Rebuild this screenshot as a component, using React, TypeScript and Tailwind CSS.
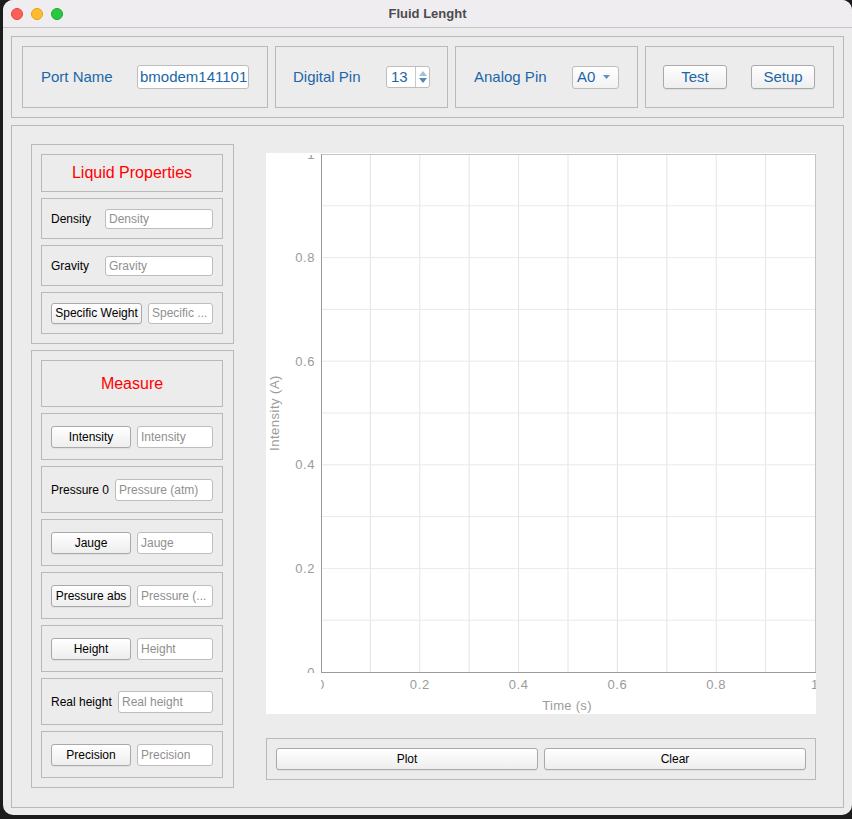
import React from "react";

const btn =
  "flex items-center justify-center rounded-[3px] border border-[#a9a9a9] bg-linear-to-b from-[#ffffff] to-[#eeeeee] shadow-[0_1px_1px_rgba(0,0,0,0.06)] text-[12px] text-black";
const field =
  "flex items-center rounded-[3px] border border-[#bdbdbd] bg-white pl-[3px] text-[12px] text-[#8f8f8f] overflow-hidden whitespace-nowrap";
const panel = "border border-[#b9b9b9]";

function Row({ children, h }: { children: React.ReactNode; h: string }) {
  return <div className={`${panel} ${h} flex items-center justify-between px-[9px]`}>{children}</div>;
}

function Chart() {
  const X0 = 55,
    X1 = 549,
    Y0 = 1,
    Y1 = 519;
  const xs = Array.from({ length: 11 }, (_, i) => X0 + (i * (X1 - X0)) / 10);
  const ys = Array.from({ length: 11 }, (_, i) => Y1 - (i * (Y1 - Y0)) / 10);
  const xl = ["0", "0.2", "0.4", "0.6", "0.8", "1"];
  const txt = { fontFamily: "'Liberation Sans', Arial, sans-serif", fontSize: 13, fill: "#9b9b9b", letterSpacing: 0.6 };
  return (
    <svg width={550} height={561} className="block bg-white">
      <defs>
        <clipPath id="cy">
          <rect x={0} y={2} width={550} height={518} />
        </clipPath>
        <clipPath id="cx">
          <rect x={55} y={0} width={495} height={561} />
        </clipPath>
      </defs>
      {xs.slice(1, 10).map((x, i) => (
        <line key={"v" + i} x1={x} x2={x} y1={Y0} y2={Y1} stroke="#e4e4e4" strokeWidth={1} />
      ))}
      {ys.slice(1, 10).map((y, i) => (
        <line key={"h" + i} x1={X0} x2={X1} y1={y} y2={y} stroke="#e9e9e9" strokeWidth={1} />
      ))}
      <line x1={X0} x2={X1 + 0.5} y1={Y0 + 0.5} y2={Y0 + 0.5} stroke="#c4c4c4" />
      <line x1={X1 + 0.5} x2={X1 + 0.5} y1={Y0} y2={Y1} stroke="#c4c4c4" />
      <line x1={X0 + 0.5} x2={X0 + 0.5} y1={Y0} y2={Y1 + 1} stroke="#9a9a9a" />
      <line x1={X0} x2={X1 + 1} y1={Y1 + 0.5} y2={Y1 + 0.5} stroke="#9a9a9a" />
      <g clipPath="url(#cy)">
        {xl.map((l, i) => (
          <text key={"yl" + i} x={49} y={ys[i * 2]} textAnchor="end" dominantBaseline="central" style={txt}>
            {l}
          </text>
        ))}
      </g>
      <g clipPath="url(#cx)">
        {xl.map((l, i) => (
          <text key={"xl" + i} x={xs[i * 2]} y={531} textAnchor="middle" dominantBaseline="central" style={txt}>
            {l}
          </text>
        ))}
      </g>
      <text x={301} y={552} textAnchor="middle" dominantBaseline="central" style={{ ...txt, letterSpacing: 0.3 }}>
        Time (s)
      </text>
      <text
        x={0}
        y={0}
        textAnchor="middle"
        dominantBaseline="central"
        transform="translate(8 260) rotate(-90)"
        style={{ ...txt, letterSpacing: 0.5 }}
      >
        Intensity (A)
      </text>
    </svg>
  );
}

export default function App() {
  return (
    <div className="w-[852px] h-[819px] bg-[#1c1c1c] pl-[3px] pb-[4px] flex font-['Liberation_Sans',Arial,sans-serif]">
      <div className="flex-1 rounded-[10px] overflow-hidden bg-[#ececec] flex flex-col">
        {/* Title bar */}
        <div className="relative h-[28px] shrink-0 bg-[#efedf0] border-b border-[#c4c4c4] flex items-center pl-[8px] gap-[8px]">
          <div className="w-[12px] h-[12px] rounded-full bg-[#fe5f57] border border-[#e2463f]" />
          <div className="w-[12px] h-[12px] rounded-full bg-[#febc2e] border border-[#e1a116]" />
          <div className="w-[12px] h-[12px] rounded-full bg-[#28c840] border border-[#1aab29]" />
          <div className="absolute inset-0 flex items-center justify-center text-[13px] font-bold text-[#4c4c4c]">
            Fluid Lenght
          </div>
        </div>

        <div className="flex flex-col px-[8px] pt-[8px] gap-[7px]">
          {/* Top panel */}
          <div className={`${panel} flex gap-[7px] pl-[10px] pr-[9px] py-[9px]`}>
            <div className={`${panel} w-[246px] h-[62px] flex items-center justify-between px-[18px]`}>
              <span className="text-[15px] text-[#1a66a8]">Port Name</span>
              <div className="w-[112px] h-[24px] rounded-[3px] border border-[#bdbdbd] bg-white flex items-center pl-[2px] text-[15px] text-[#1a66a8] whitespace-nowrap overflow-hidden">
                bmodem141101
              </div>
            </div>
            <div className={`${panel} w-[173px] h-[62px] flex items-center justify-between px-[17px]`}>
              <span className="text-[15px] text-[#1a66a8]">Digital Pin</span>
              <div className="w-[44px] h-[22px] rounded-[3px] border border-[#bdbdbd] bg-white flex">
                <div className="w-[28px] flex items-center pl-[4px] text-[15px] text-[#1a66a8]">13</div>
                <div className="flex-1 border-l border-[#c8c8c8] flex flex-col items-center justify-center gap-[2px]">
                  <svg width="8" height="5" viewBox="0 0 8 5">
                    <path d="M4 0 L8 5 L0 5 Z" fill="#a9bfd3" />
                  </svg>
                  <svg width="8" height="5" viewBox="0 0 8 5">
                    <path d="M0 0 L8 0 L4 5 Z" fill="#4a8bc4" />
                  </svg>
                </div>
              </div>
            </div>
            <div className={`${panel} w-[183px] h-[62px] flex items-center justify-between pl-[18px] pr-[18px]`}>
              <span className="text-[15px] text-[#1a66a8]">Analog Pin</span>
              <div className="w-[47px] h-[23px] rounded-[3px] border border-[#bdbdbd] bg-linear-to-b from-[#ffffff] to-[#f2f2f2] flex items-center justify-between pl-[4px] pr-[8px]">
                <span className="text-[15px] text-[#1a66a8]">A0</span>
                <svg width="7" height="4" viewBox="0 0 7 4">
                  <path d="M0 0 L7 0 L3.5 4 Z" fill="#5b93c8" />
                </svg>
              </div>
            </div>
            <div className={`${panel} w-[189px] h-[62px] flex items-center justify-between pl-[17px] pr-[18px]`}>
              <div className={`${btn} w-[64px] h-[24px] !text-[15px] !text-[#1a66a8]`}>Test</div>
              <div className={`${btn} w-[64px] h-[24px] !text-[15px] !text-[#1a66a8]`}>Setup</div>
            </div>
          </div>

          {/* Main panel */}
          <div className={`${panel} h-[683px] flex items-start pl-[19px] pt-[18px] gap-[32px]`}>
            {/* Left column */}
            <div className="w-[203px] flex flex-col gap-[6px]">
              <div className={`${panel} flex flex-col gap-[6px] pt-[9px] pb-[9px] pl-[9px] pr-[10px]`}>
                <div className={`${panel} h-[38px] flex items-center justify-center text-[16px] text-[#ff0000]`}>
                  Liquid Properties
                </div>
                <Row h="h-[41px]">
                  <span className="text-[12px] text-black">Density</span>
                  <div className={`${field} w-[108px] h-[20px]`}>Density</div>
                </Row>
                <Row h="h-[41px]">
                  <span className="text-[12px] text-black">Gravity</span>
                  <div className={`${field} w-[108px] h-[20px]`}>Gravity</div>
                </Row>
                <Row h="h-[42px]">
                  <div className={`${btn} w-[91px] h-[21px]`}>Specific Weight</div>
                  <div className={`${field} w-[65px] h-[21px]`}>Specific ...</div>
                </Row>
              </div>

              <div className={`${panel} flex flex-col gap-[6px] pt-[9px] pb-[9px] pl-[9px] pr-[10px]`}>
                <div className={`${panel} h-[47px] flex items-center justify-center text-[16px] text-[#ff0000]`}>
                  Measure
                </div>
                <Row h="h-[47px]">
                  <div className={`${btn} w-[80px] h-[22px]`}>Intensity</div>
                  <div className={`${field} w-[76px] h-[22px]`}>Intensity</div>
                </Row>
                <Row h="h-[47px]">
                  <span className="text-[12px] text-black">Pressure 0</span>
                  <div className={`${field} w-[98px] h-[22px]`}>Pressure (atm)</div>
                </Row>
                <Row h="h-[47px]">
                  <div className={`${btn} w-[80px] h-[22px]`}>Jauge</div>
                  <div className={`${field} w-[76px] h-[22px]`}>Jauge</div>
                </Row>
                <Row h="h-[47px]">
                  <div className={`${btn} w-[80px] h-[22px]`}>Pressure abs</div>
                  <div className={`${field} w-[76px] h-[22px]`}>Pressure (...</div>
                </Row>
                <Row h="h-[47px]">
                  <div className={`${btn} w-[80px] h-[22px]`}>Height</div>
                  <div className={`${field} w-[76px] h-[22px]`}>Height</div>
                </Row>
                <Row h="h-[47px]">
                  <span className="text-[12px] text-black">Real height</span>
                  <div className={`${field} w-[95px] h-[22px]`}>Real height</div>
                </Row>
                <Row h="h-[47px]">
                  <div className={`${btn} w-[80px] h-[22px]`}>Precision</div>
                  <div className={`${field} w-[76px] h-[22px]`}>Precision</div>
                </Row>
              </div>
            </div>

            {/* Chart column */}
            <div className="w-[550px] mt-[9px] flex flex-col gap-[24px]">
              <Chart />
              <div className={`${panel} flex gap-[6px] p-[9px]`}>
                <div className={`${btn} flex-1 h-[22px]`}>Plot</div>
                <div className={`${btn} flex-1 h-[22px]`}>Clear</div>
              </div>
            </div>
          </div>
        </div>
      </div>
    </div>
  );
}
